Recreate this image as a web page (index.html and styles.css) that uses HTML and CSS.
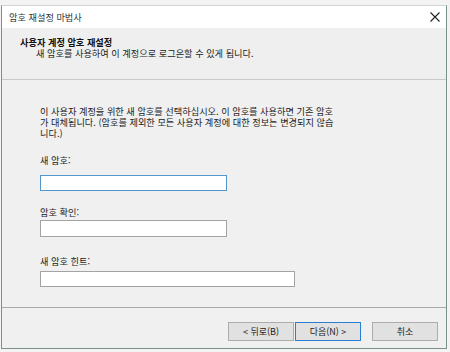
FILE: index.html
```html
<!DOCTYPE html>
<html lang="ko">
<head>
<meta charset="utf-8">
<title>암호 재설정 마법사</title>
<link rel="stylesheet" href="styles.css">
</head>
<body>
<div class="window">
  <div class="titlebar">
    <span class="title">암호 재설정 마법사</span>
    <svg class="close" width="10" height="10" viewBox="0 0 10 10"><path d="M0.5 0.5 L9.5 9.5 M9.5 0.5 L0.5 9.5" stroke="#222" stroke-width="1.1" fill="none"/></svg>
  </div>
  <div class="header">
    <div class="h-title">사용자 계정 암호 재설정</div>
    <div class="h-sub">새 암호를 사용하여 이 계정으로 로그온할 수 있게 됩니다.</div>
  </div>
  <div class="content">
    <p class="desc">이 사용자 계정을 위한 새 암호를 선택하십시오. 이 암호를 사용하면 기존 암호<br>가 대체됩니다. (암호를 제외한 모든 사용자 계정에 대한 정보는 변경되지 않습<br>니다.)</p>
    <div class="field f1">
      <label>새 암호:</label>
      <div class="input short focus"></div>
    </div>
    <div class="field f2">
      <label>암호 확인:</label>
      <div class="input short"></div>
    </div>
    <div class="field f3">
      <label>새 암호 힌트:</label>
      <div class="input long"></div>
    </div>
  </div>
  <div class="footer">
    <div class="btn">&lt; 뒤로(B)</div>
    <div class="btn default">다음(N) &gt;</div>
    <div class="btn cancel">취소</div>
  </div>
</div>
</body>
</html>
```

FILE: styles.css
```css
html, body {
  margin: 0;
  padding: 0;
}
body {
  width: 450px;
  height: 352px;
  background: #f3f3f3;
  font-family: "Noto Sans CJK KR", "Noto Sans", sans-serif;
  font-size: 9.2px;
  color: #1a1a1a;
  overflow: hidden;
}
.window {
  margin: 5px 0 0 1px;
  width: 446px;
  height: 344px;
  box-sizing: border-box;
  border: 1.5px solid #77928c;
  border-top: 1px solid #cfd6d4;
  background: #f0f0f0;
  display: flex;
  flex-direction: column;
}
.titlebar {
  height: 22px;
  background: #ffffff;
  display: flex;
  align-items: center;
  justify-content: space-between;
  padding: 0 6px 0 7px;
}
.title {
  font-size: 9.2px;
  color: #333;
}
.header {
  height: 52px;
  box-sizing: border-box;
  background: #efefef;
  border-bottom: 1px solid #c9c9c9;
  padding: 9px 0 0 18px;
}
.h-title {
  font-weight: bold;
  line-height: 11px;
  color: #111;
}
.h-sub {
  padding-left: 16px;
  line-height: 11px;
  color: #222;
}
.content {
  flex: 1;
  padding: 26px 0 0 38px;
  border-bottom: 1px solid #a9a9a9;
}
.desc {
  margin: 0;
  line-height: 11px;
  color: #222;
}
.field label {
  display: block;
  line-height: 11px;
  color: #222;
}
.f1 { margin-top: 16px; }
.f1 label { margin-bottom: 8.5px; }
.f2 { margin-top: 16.5px; }
.f2 label { margin-bottom: 1.5px; }
.f3 { margin-top: 19.5px; }
.f3 label { margin-bottom: 3.5px; }
.input {
  height: 16px;
  box-sizing: border-box;
  background: #fff;
  border: 1px solid #a3a3a3;
}
.f2 .input { height: 17px; }
.input.short { width: 187px; }
.input.long { width: 255px; }
.input.focus { border-color: #4f98cf; }
.footer {
  height: 40px;
  display: flex;
  align-items: flex-start;
  padding: 14px 0 0 226px;
  box-sizing: border-box;
}
.btn {
  width: 66px;
  height: 19px;
  box-sizing: border-box;
  background: #e1e1e1;
  border: 1px solid #adadad;
  display: flex;
  align-items: center;
  justify-content: center;
  font-size: 9px;
  color: #222;
  margin-right: 1px;
}
.btn.default {
  border: 1.5px solid #2a7fd0;
}
.btn.cancel {
  margin-left: 10px;
}
```
